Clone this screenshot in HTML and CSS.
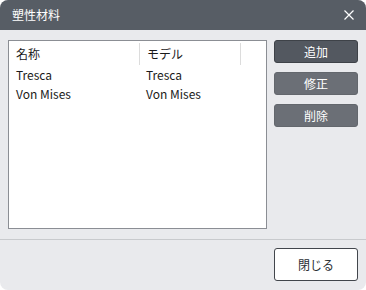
FILE: index.html
```html
<!DOCTYPE html>
<html lang="ja">
<head>
<meta charset="utf-8">
<link rel="stylesheet" href="styles.css">
</head>
<body>
<div class="window">
  <div class="titlebar">
    <span class="title">塑性材料</span>
    <svg class="close" width="10" height="10" viewBox="0 0 10 10"><path d="M0.5 0.5 L9.5 9.5 M9.5 0.5 L0.5 9.5" stroke="#ffffff" stroke-width="1.2" fill="none"/></svg>
  </div>
  <div class="content">
    <div class="list">
      <div class="row head">
        <div class="cell c1">名称</div>
        <div class="cell c2">モデル</div>
        <div class="cell c3"></div>
      </div>
      <div class="row">
        <div class="cell c1">Tresca</div>
        <div class="cell c2">Tresca</div>
      </div>
      <div class="row">
        <div class="cell c1">Von Mises</div>
        <div class="cell c2">Von Mises</div>
      </div>
    </div>
    <div class="buttons">
      <button class="btn primary">追加</button>
      <button class="btn secondary">修正</button>
      <button class="btn secondary">削除</button>
    </div>
  </div>
  <div class="footer">
    <button class="closebtn">閉じる</button>
  </div>
</div>
</body>
</html>
```
FILE: styles.css
```css
html, body {
  margin: 0;
  padding: 0;
  background: #ffffff;
}
body {
  font-family: "Noto Sans CJK JP", "Open Sans", sans-serif;
  font-size: 12px;
  color: #1a1a1a;
}
.window {
  width: 366px;
  height: 290px;
  background: #e9eaed;
  border-radius: 8px;
  overflow: hidden;
  display: flex;
  flex-direction: column;
}
.titlebar {
  height: 30px;
  background: #575d65;
  color: #ffffff;
  display: flex;
  align-items: center;
  justify-content: space-between;
  padding: 0 12px 0 12px;
  box-sizing: border-box;
  flex: none;
}
.title {
  font-size: 12px;
  line-height: 30px;
}
.close {
  display: block;
  margin-top: -1px;
}
.content {
  display: flex;
  align-items: flex-start;
  padding: 10px 8px 0 8px;
  gap: 7px;
  flex: none;
}
.list {
  width: 259px;
  height: 189px;
  box-sizing: border-box;
  border: 1px solid #8b8e94;
  background: #ffffff;
}
.row {
  display: flex;
  height: 19px;
  align-items: center;
}
.row.head {
  height: 24px;
}
.cell {
  box-sizing: border-box;
  padding-left: 7px;
  white-space: nowrap;
  line-height: 19px;
}
.c1 { width: 130px; }
.c2 { width: 101px; }
.head .cell {
  height: 22px;
  line-height: 22px;
  margin-top: 1px;
}
.head .c2, .head .c3 {
  border-left: 1px solid #dcdcdc;
}
.head .c3 {
  width: 20px;
}
.buttons {
  display: flex;
  flex-direction: column;
  gap: 9px;
}
.btn {
  width: 84px;
  height: 23px;
  border-radius: 3px;
  font-family: inherit;
  font-size: 12px;
  color: #ffffff;
  padding: 0;
  line-height: 21px;
}
.primary {
  background: #535860;
  border: 1px solid #3e4248;
}
.secondary {
  background: #6b6f76;
  border: 1px solid #63676d;
}
.footer {
  margin-top: 10px;
  border-top: 1px solid #c8cacd;
  display: flex;
  justify-content: flex-end;
  padding: 8px 8px 0 0;
}
.closebtn {
  width: 84px;
  height: 33px;
  background: #ffffff;
  border: 1px solid #42464c;
  border-radius: 3px;
  font-family: inherit;
  font-size: 12px;
  color: #2a2e33;
  padding: 0;
}
```
